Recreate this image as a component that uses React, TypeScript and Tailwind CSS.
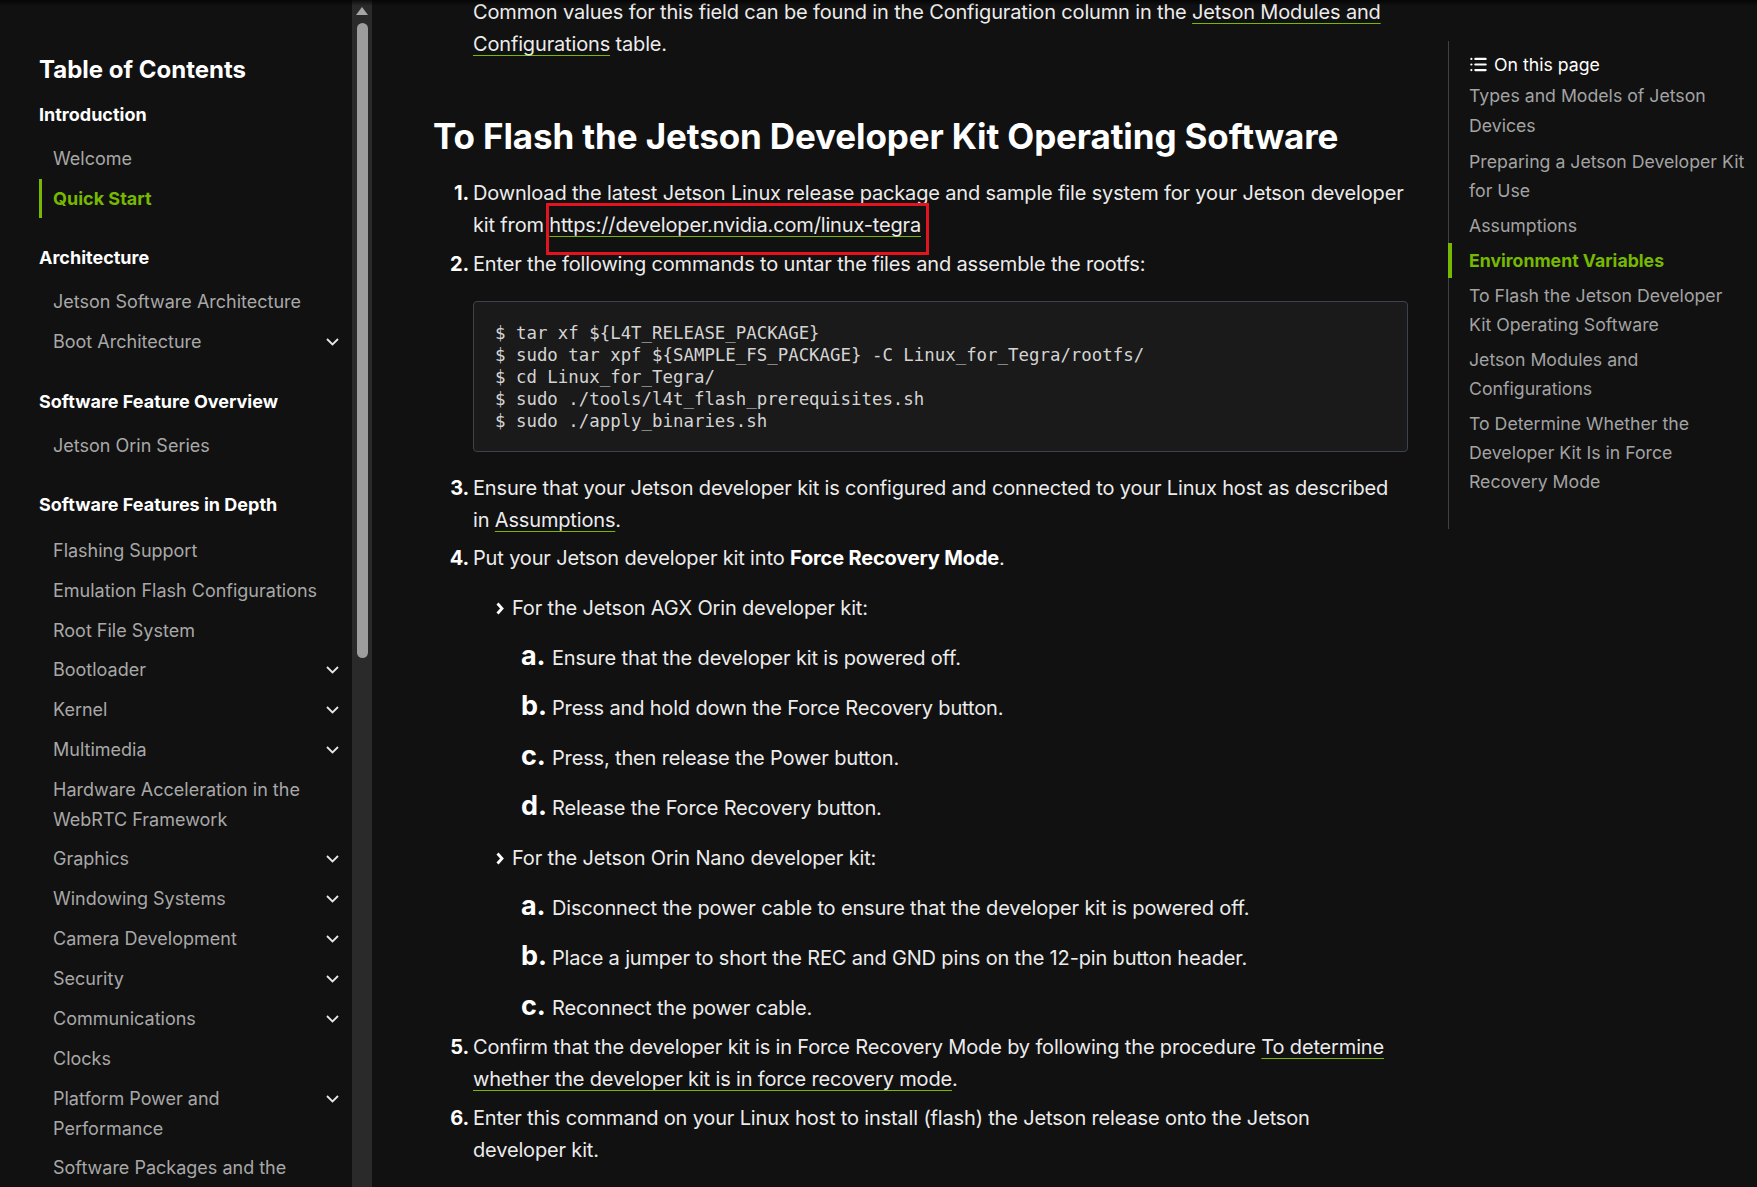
import { List } from "lucide-react";

type NavItem = { label: string; expand?: boolean; active?: boolean };
type NavSection = { title: string; items: NavItem[] };

const sections: NavSection[] = [
  {
    title: "Introduction",
    items: [{ label: "Welcome" }, { label: "Quick Start", active: true }],
  },
  {
    title: "Architecture",
    items: [{ label: "Jetson Software Architecture" }, { label: "Boot Architecture", expand: true }],
  },
  { title: "Software Feature Overview", items: [{ label: "Jetson Orin Series" }] },
  {
    title: "Software Features in Depth",
    items: [
      { label: "Flashing Support" },
      { label: "Emulation Flash Configurations" },
      { label: "Root File System" },
      { label: "Bootloader", expand: true },
      { label: "Kernel", expand: true },
      { label: "Multimedia", expand: true },
      { label: "Hardware Acceleration in the WebRTC Framework" },
      { label: "Graphics", expand: true },
      { label: "Windowing Systems", expand: true },
      { label: "Camera Development", expand: true },
      { label: "Security", expand: true },
      { label: "Communications", expand: true },
      { label: "Clocks" },
      { label: "Platform Power and Performance", expand: true },
      { label: "Software Packages and the Update Mechanism" },
    ],
  },
];

const pageToc = [
  { label: "Types and Models of Jetson Devices" },
  { label: "Preparing a Jetson Developer Kit for Use" },
  { label: "Assumptions" },
  { label: "Environment Variables", active: true },
  { label: "To Flash the Jetson Developer Kit Operating Software" },
  { label: "Jetson Modules and Configurations" },
  { label: "To Determine Whether the Developer Kit Is in Force Recovery Mode" },
];

const codeLines = [
  "$ tar xf ${L4T_RELEASE_PACKAGE}",
  "$ sudo tar xpf ${SAMPLE_FS_PACKAGE} -C Linux_for_Tegra/rootfs/",
  "$ cd Linux_for_Tegra/",
  "$ sudo ./tools/l4t_flash_prerequisites.sh",
  "$ sudo ./apply_binaries.sh",
];

const agx = [
  "Ensure that the developer kit is powered off.",
  "Press and hold down the Force Recovery button.",
  "Press, then release the Power button.",
  "Release the Force Recovery button.",
];

const nano = [
  "Disconnect the power cable to ensure that the developer kit is powered off.",
  "Place a jumper to short the REC and GND pins on the 12-pin button header.",
  "Reconnect the power cable.",
];

const link = "underline decoration-[#76b900] decoration-1 underline-offset-[4px]";

function Chevron() {
  return (
    <svg width="13" height="8" viewBox="0 0 13 8" fill="none" className="shrink-0">
      <polyline points="1,1 6.5,6.5 12,1" stroke="#e8e8e8" strokeWidth="1.8" />
    </svg>
  );
}

function Sidebar() {
  return (
    <aside className="w-[352px] shrink-0 pl-[39px] pr-[13px] pt-[54px]">
      <h2 className="text-[24px] leading-[32px] font-bold text-white">Table of Contents</h2>
      <div className="mt-[15px]">
        {sections.map((s, i) => (
          <div key={s.title} className={i > 0 ? "mt-[26px]" : ""}>
            <div
              className={`text-[18px] leading-[28px] font-bold text-white ${
                i === 3 ? "pb-[12px]" : "pb-[10px]"
              }`}
            >
              {s.title}
            </div>
            {s.items.map((it) => (
              <div
                key={it.label}
                className={`flex items-start justify-between py-[5px] pl-[11px] border-l-[3px] leading-[29.6px] text-[18px] ${
                  it.active ? "border-[#76b900] text-[#76b900] font-bold" : "border-transparent text-[#a8a8a8]"
                }`}
              >
                <span className="max-w-[300px]">{it.label}</span>
                {it.expand && (
                  <span className="h-[30px] flex items-center">
                    <Chevron />
                  </span>
                )}
              </div>
            ))}
          </div>
        ))}
      </div>
    </aside>
  );
}

function Scrollbar() {
  return (
    <div className="w-[20px] shrink-0 bg-[#2a2a2a] flex flex-col items-center">
      <svg width="12" height="8" viewBox="0 0 12 8" className="mt-[7px]">
        <polygon points="6,0 12,8 0,8" fill="#a6a6a6" />
      </svg>
      <div className="mt-[8px] h-[635px] w-[11px] rounded-full bg-[#9d9d9d]" />
    </div>
  );
}

function SubList({ title, steps }: { title: string; steps: string[] }) {
  return (
    <div className="mt-[18px] pl-[23px]">
      <div className="flex items-center">
        <svg width="8" height="13" viewBox="0 0 8 13" className="shrink-0">
          <polyline points="1.5,1.5 6,6.5 1.5,11.5" fill="none" stroke="#fff" strokeWidth="2.8" />
        </svg>
        <span className="ml-[8px]">{title}</span>
      </div>
      <div className="pl-[25px]">
        {steps.map((s, i) => (
          <div key={s} className="mt-[18px] h-[32px]">
            <span className="inline-block w-[31px] text-[27px] font-bold text-white leading-[0px]">
              {"abcd"[i]}.
            </span>
            {s}
          </div>
        ))}
      </div>
    </div>
  );
}

function Step({ n, children, className = "" }: { n: number; children: React.ReactNode; className?: string }) {
  return (
    <li className={`flex ${className}`}>
      <span className="w-[40px] shrink-0 text-right font-bold text-white pr-[4px]">{n}.</span>
      <div className="w-[935px]">{children}</div>
    </li>
  );
}

function Content() {
  return (
    <main className="w-[1076px] shrink-0 pl-[61px] pr-[40px] text-[20px] tracking-[-0.16px] leading-[32px] text-[#ececec]">
      <p className="-mt-[4px] pl-[40px] pr-[20px]">
        Common values for this field can be found in the Configuration column in the{" "}
        <a className={link}>Jetson Modules and Configurations</a> table.
      </p>
      <h1 className="mt-[56px] text-[35px] leading-[40px] font-bold text-white tracking-[-0.12px]">
        To Flash the Jetson Developer Kit Operating Software
      </h1>
      <ol className="mt-[21px]">
        <Step n={1}>
          Download the latest Jetson Linux release package and sample file system for your Jetson developer kit from{" "}
          <span className="relative inline-block">
            <a className={link}>https://developer.nvidia.com/linux-tegra</a>
            <span className="absolute -left-[3px] -right-[8px] -top-[6px] -bottom-[14px] border-[3px] border-[#e3141f]" />
          </span>
        </Step>
        <Step n={2} className="mt-[7px]">
          Enter the following commands to untar the files and assemble the rootfs:
          <div className="mt-[21px] rounded-[4px] border border-[#3d434b] bg-[#1a1a1a] pt-[20px] pb-[19px] pl-[21px] font-['DejaVu_Sans_Mono',monospace] text-[17.4px] tracking-normal leading-[22px] text-[#d4d4d4]">
            {codeLines.map((l) => (
              <div key={l} className="whitespace-pre">
                {l}
              </div>
            ))}
          </div>
        </Step>
        <Step n={3} className="mt-[20px]">
          Ensure that your Jetson developer kit is configured and connected to your Linux host as described in{" "}
          <a className={link}>Assumptions</a>.
        </Step>
        <Step n={4} className="mt-[6px]">
          Put your Jetson developer kit into <b className="font-bold text-white">Force Recovery Mode</b>.
          <SubList title="For the Jetson AGX Orin developer kit:" steps={agx} />
          <SubList title="For the Jetson Orin Nano developer kit:" steps={nano} />
        </Step>
        <Step n={5} className="mt-[7px]">
          Confirm that the developer kit is in Force Recovery Mode by following the procedure{" "}
          <a className={link}>To determine whether the developer kit is in force recovery mode</a>.
        </Step>
        <Step n={6} className="mt-[7px]">
          Enter this command on your Linux host to install (flash) the Jetson release onto the Jetson developer kit.
        </Step>
      </ol>
    </main>
  );
}

function PageToc() {
  return (
    <nav className="mt-[41px] h-[488px] flex-1 border-l border-[#3b4149] pt-[8px] text-[17.7px] leading-[29px]">
      <div className="flex h-[30px] items-center gap-[6px] pl-[20px] text-white">
        <List size={19} strokeWidth={2.8} />
        <span>On this page</span>
      </div>
      {pageToc.map((t, i) => (
        <div
          key={t.label}
          className={`-ml-[1px] border-l-[4px] pl-[17px] pr-[8px] ${
            i === 0 ? "pt-[2px] pb-[3px] leading-[30px]" : "py-[3px]"
          } ${t.active ? "border-[#76b900] text-[#76b900] font-bold" : "border-transparent text-[#a3a3a3]"}`}
        >
          {t.label}
        </div>
      ))}
    </nav>
  );
}

export default function App() {
  return (
    <div className="relative flex h-[1187px] w-[1757px] overflow-hidden bg-[#111111] font-['Inter',sans-serif]">
      <Sidebar />
      <Scrollbar />
      <Content />
      <PageToc />
      <div className="pointer-events-none absolute inset-x-0 top-0 h-[6px] bg-gradient-to-b from-black/70 to-transparent" />
    </div>
  );
}
